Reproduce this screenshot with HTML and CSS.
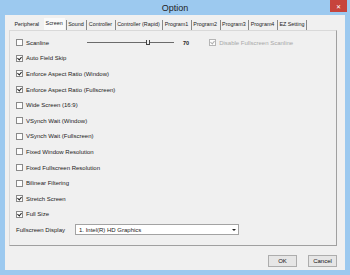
FILE: index.html
```html
<!DOCTYPE html>
<html lang="en">
<head>
    <meta charset="UTF-8">
    <title>Option</title>
    <link rel="stylesheet" href="styles.css">
</head>
<body>
    <div class="window">
        <div class="titlebar">
            <span class="title">Option</span>
            <span class="close">&#x2715;</span>
        </div>

        <div class="client">
            <div class="tabs">
                <span class="tab">Peripheral</span>
                <span class="tab active">Screen</span>
                <span class="tab sep">Sound</span>
                <span class="tab sep">Controller</span>
                <span class="tab sep">Controller (Rapid)</span>
                <span class="tab sep">Program1</span>
                <span class="tab sep">Program2</span>
                <span class="tab sep">Program3</span>
                <span class="tab sep">Program4</span>
                <span class="tab sep last">EZ Setting</span>
            </div>

            <div class="panel">
                <div class="row">
                    <label class="check"><span class="box"></span>Scanline</label>
                    <div class="slider">
                        <div class="track"></div>
                        <div class="thumb"></div>
                    </div>
                    <span class="slider-value">70</span>
                    <label class="check disabled"><span class="box on"></span>Disable Fullscreen Scanline</label>
                </div>
                <div class="row"><label class="check"><span class="box on"></span>Auto Field Skip</label></div>
                <div class="row"><label class="check"><span class="box on"></span>Enforce Aspect Ratio (Window)</label></div>
                <div class="row"><label class="check"><span class="box on"></span>Enforce Aspect Ratio (Fullscreen)</label></div>
                <div class="row"><label class="check"><span class="box"></span>Wide Screen (16:9)</label></div>
                <div class="row"><label class="check"><span class="box"></span>VSynch Wait (Window)</label></div>
                <div class="row"><label class="check"><span class="box"></span>VSynch Wait (Fullscreen)</label></div>
                <div class="row"><label class="check"><span class="box"></span>Fixed Window Resolution</label></div>
                <div class="row"><label class="check"><span class="box"></span>Fixed Fullscreen Resolution</label></div>
                <div class="row"><label class="check"><span class="box"></span>Bilinear Filtering</label></div>
                <div class="row"><label class="check"><span class="box on"></span>Stretch Screen</label></div>
                <div class="row"><label class="check"><span class="box on"></span>Full Size</label></div>
                <div class="row">
                    <span class="display-label">Fullscreen Display</span>
                    <div class="select">
                        <span>1. Intel(R) HD Graphics</span>
                        <span class="arrow"></span>
                    </div>
                </div>
            </div>

            <div class="buttons">
                <button class="btn">OK</button>
                <button class="btn">Cancel</button>
            </div>
        </div>
    </div>
</body>
</html>
```

FILE: styles.css
```css
body {
    margin: 0;
    font-family: "Liberation Sans", Arial, sans-serif;
    background-color: #ffffff;
}
.window {
    width: 350px;
    height: 275px;
    box-sizing: border-box;
    background-color: #9cc9ef;
    padding: 0 5px 5px 5px;
    display: flex;
    flex-direction: column;
}
.titlebar {
    height: 15px;
    display: flex;
    align-items: center;
    justify-content: center;
    position: relative;
}
.title {
    font-size: 9px;
    color: #222;
    padding-top: 1px;
}
.close {
    position: absolute;
    right: -2px;
    top: 0;
    width: 17px;
    height: 12px;
    background-color: #c7443c;
    color: white;
    font-size: 6px;
    display: flex;
    align-items: center;
    justify-content: center;
}
.client {
    flex: 1;
    background-color: #f0f0f0;
    display: flex;
    flex-direction: column;
    padding: 3px 8px 0 4px;
    font-size: 6px;
    color: #222;
}
.tabs {
    display: flex;
    align-items: flex-end;
    height: 12px;
    padding-left: 4px;
    white-space: nowrap;
    font-size: 5.4px;
}
.tab {
    flex-shrink: 0;
    padding: 0 1.5px 2px 1.5px;
    line-height: 8px;
}
.tab.sep {
    border-left: 1px solid #888;
    margin-left: 1px;
}
.tab.last {
    border-right: 1px solid #888;
}
.tab.active {
    background-color: #fafafa;
    margin-left: 3px;
    padding: 1px 2px 3px 2px;
}
.panel {
    flex: 0 0 216px;
    border: 1px solid #d9d9d9;
    border-right-color: #a0a0a0;
    border-bottom-color: #a0a0a0;
    box-sizing: border-box;
    padding: 4px 0 0 6px;
}
.row {
    height: 15.6px;
    display: flex;
    align-items: center;
}
.check {
    display: flex;
    align-items: center;
    gap: 3px;
}
.box {
    width: 5px;
    height: 5px;
    border: 1px solid #8a8a8a;
    background-color: #fdfdfd;
    position: relative;
}
.box.on::after {
    content: "";
    position: absolute;
    left: 1px;
    top: 0;
    width: 2px;
    height: 3px;
    border: solid #222;
    border-width: 0 1px 1px 0;
    transform: rotate(40deg);
}
.check.disabled {
    color: #a8a8a8;
    margin-left: 20px;
}
.check.disabled .box {
    border-color: #b5b5b5;
}
.check.disabled .box.on::after {
    border-color: #b0b0b0;
}
.slider {
    width: 87px;
    height: 7px;
    margin-left: 38px;
    position: relative;
}
.track {
    margin-top: 3px;
    height: 1px;
    background-color: #6b6b6b;
}
.thumb {
    position: absolute;
    left: 59px;
    top: 1px;
    width: 2px;
    height: 4px;
    border: solid #444;
    border-width: 0 1px 1px 1px;
    background-color: #f0f0f0;
}
.slider-value {
    margin-left: 9px;
    font-weight: bold;
    font-size: 5.5px;
}
.display-label {
    width: 59px;
}
.select {
    width: 164px;
    height: 11px;
    box-sizing: border-box;
    border: 1px solid #a3a3a3;
    background-color: white;
    display: flex;
    align-items: center;
    justify-content: space-between;
    padding: 0 2px 0 3px;
}
.arrow {
    width: 0;
    height: 0;
    border-left: 2px solid transparent;
    border-right: 2px solid transparent;
    border-top: 2px solid #222;
}
.buttons {
    display: flex;
    justify-content: flex-end;
    gap: 11px;
    margin-top: 9px;
}
.btn {
    width: 29px;
    height: 12px;
    padding: 0;
    font-family: "Liberation Sans", Arial, sans-serif;
    font-size: 6px;
    color: #111;
    background-color: #e6e6e6;
    border: 1px solid #adadad;
    border-radius: 0;
}
```
